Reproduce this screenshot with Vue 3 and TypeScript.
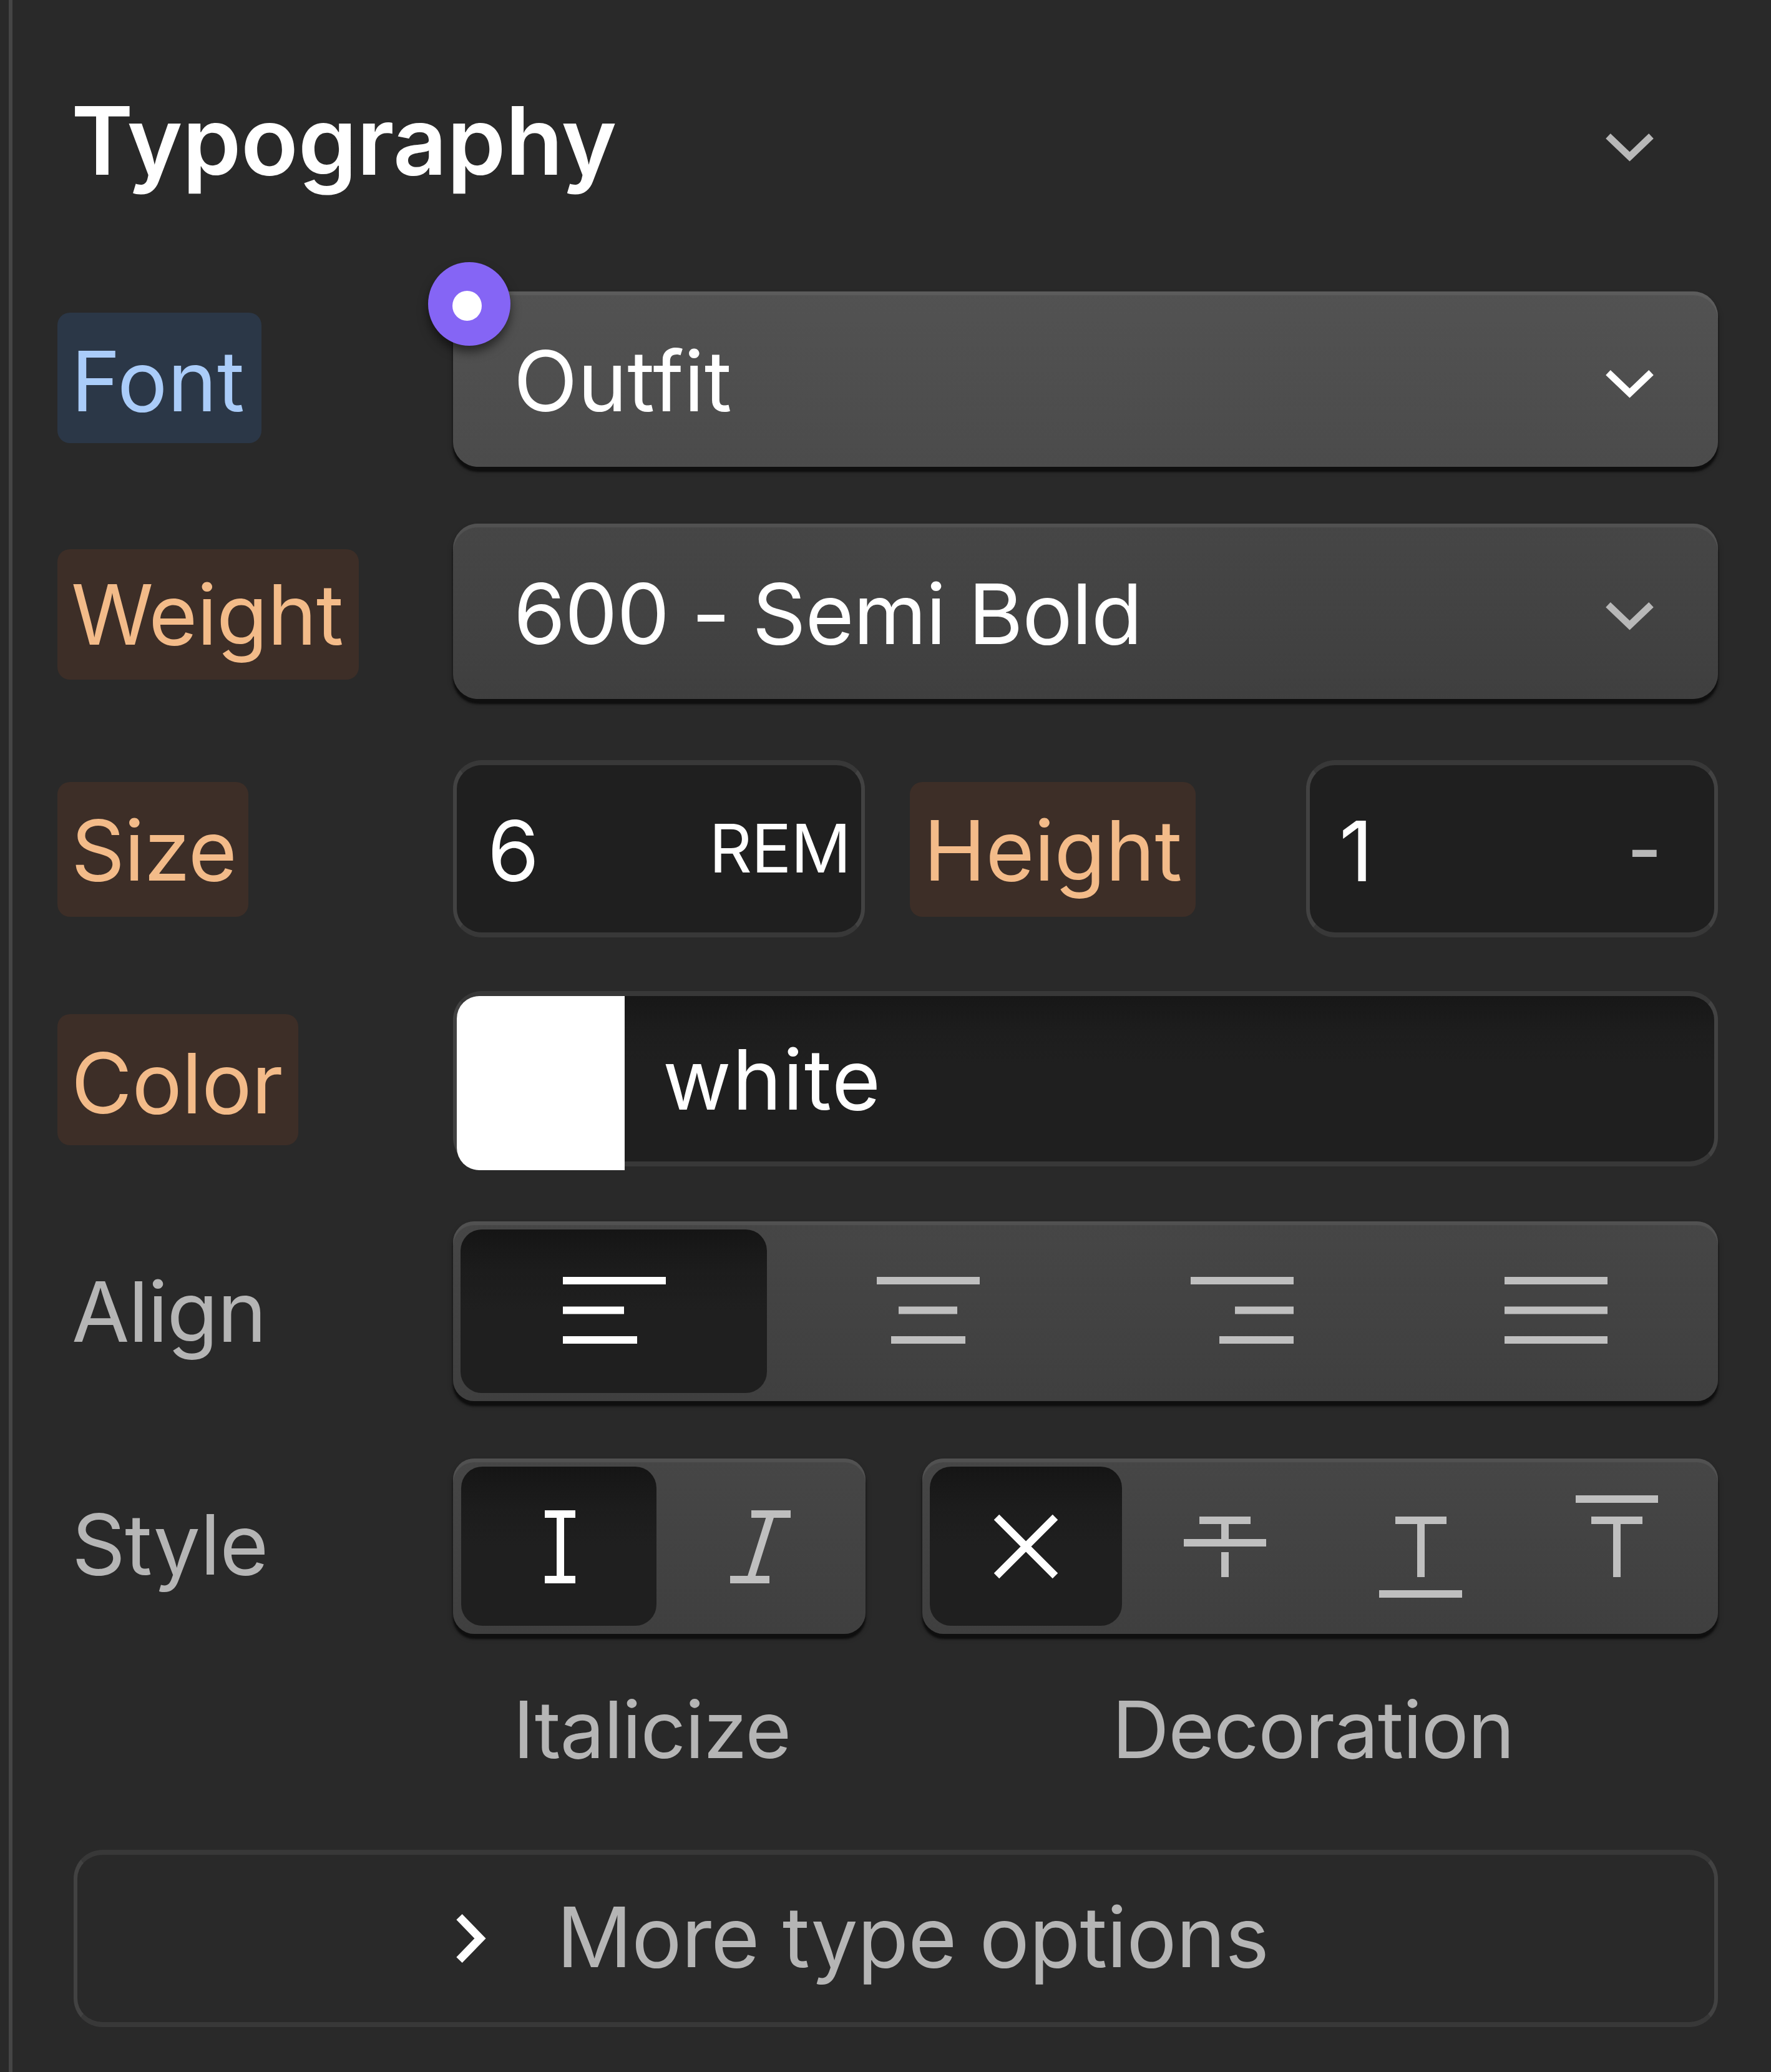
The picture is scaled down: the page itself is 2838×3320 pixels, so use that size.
<script setup lang="ts">
type Bar = [x: number, width: number]

interface AlignOption {
  name: string
  active?: boolean
  bars: [Bar, Bar, Bar]
}

const barTops = [0, 47.5, 95]

const alignOptions: AlignOption[] = [
  { name: 'Left', active: true, bars: [[1, 165], [1, 98], [1, 119]] },
  { name: 'Center', bars: [[1, 165], [36, 94], [24, 119]] },
  { name: 'Right', bars: [[1, 165], [72, 94], [47, 119]] },
  { name: 'Justify', bars: [[1, 165], [1, 165], [1, 165]] },
]

const decorations = ['Line through', 'Underline', 'Overline'] as const
</script>

<template>
  <div class="page">
    <section class="panel">
      <header class="head">
        <h2 class="title">Typography</h2>
        <svg class="chevron muted" viewBox="0 0 90 60"><path d="M10 12 44.500 45 79 12" /></svg>
      </header>

      <div class="row row-font">
        <div class="label-cell"><label class="chip blue font-chip">Font</label></div>
        <div class="select bright">
          <span class="outfit">Outfit</span>
          <svg class="chevron" viewBox="0 0 90 60"><path d="M10 12 44.500 45 79 12" /></svg>
          <span class="badge"><i></i></span>
        </div>
      </div>

      <div class="row row-weight">
        <div class="label-cell"><label class="chip weight-chip">Weight</label></div>
        <div class="select">
          <span class="weight-value">600 - Semi Bold</span>
          <svg class="chevron muted" viewBox="0 0 90 60"><path d="M10 12 44.500 45 79 12" /></svg>
        </div>
      </div>

      <div class="row row-size">
        <div class="label-cell"><label class="chip size-chip">Size</label></div>
        <div class="input size-input"><span>6</span><span class="unit">REM</span></div>
        <label class="chip height-chip">Height</label>
        <div class="input height-input"><span>1</span><span class="dash">-</span></div>
      </div>

      <div class="row row-color">
        <div class="label-cell"><label class="chip color-chip">Color</label></div>
        <div class="input color-input">
          <div class="swatch"></div>
          <span class="color-value">white</span>
        </div>
      </div>

      <div class="row row-align">
        <div class="label-cell plain align-label">Align</div>
        <div class="group align-group">
          <button v-for="o in alignOptions" :key="o.name" :class="{ active: o.active }" :aria-label="o.name">
            <svg class="align-icon" viewBox="0 0 166 107">
              <rect v-for="(b, i) in o.bars" :key="i" :x="b[0]" :y="barTops[i]" :width="b[1]" height="12" />
            </svg>
          </button>
        </div>
      </div>

      <div class="row row-style">
        <div class="label-cell plain style-label">Style</div>
        <div class="group italic-group">
          <button class="active roman" aria-label="Normal">
            <svg class="glyph" viewBox="0 0 160 180">
              <path d="M53 38H102M78 38V143M53 143H102" />
            </svg>
          </button>
          <button aria-label="Italic">
            <svg class="glyph" viewBox="0 0 160 180">
              <path d="M64 38H127M95.500 38 62.500 143M30 143H93" />
            </svg>
          </button>
        </div>
        <div class="group deco-group">
          <button class="active" aria-label="None">
            <svg class="glyph" viewBox="0 0 160 180"><path d="M33 43 127 137M127 43 33 137" /></svg>
          </button>
          <button v-for="d in decorations" :key="d" :aria-label="d">
            <svg class="glyph" viewBox="0 0 160 180">
              <path v-if="d === 'Line through'" d="M38 48H120M79 48V84M13 84H145M79 99V139" />
              <path v-else-if="d === 'Underline'" d="M38 48H120M79 48V139M12 166H145" />
              <path v-else d="M38 48H120M79 48V139M13 14H145" />
            </svg>
          </button>
        </div>
      </div>

      <div class="captions">
        <span class="cap-italic">Italicize</span>
        <span class="cap-deco">Decoration</span>
      </div>

      <button class="more">
        <svg class="arrow" viewBox="0 0 60 90"><path d="M10 10.500 43.500 45 10 79.500" /></svg>
        <span>More type options</span>
      </button>
    </section>
  </div>
</template>

<style>
body {
  background: #292929;
}
</style>

<style scoped>
.page {
  box-sizing: border-box;
  width: 2838px;
  height: 3320px;
  padding-left: 14px;
  overflow: hidden;
  background: #292929;
  color: #fff;
  font-family: Inter, sans-serif;
  font-size: 134px;
  line-height: 160px;
  letter-spacing: -0.9px;
  font-optical-sizing: none;
  white-space: nowrap;
}
.page * {
  box-sizing: border-box;
}
.panel {
  display: flex;
  flex-direction: column;
  height: 100%;
  padding: 0 85px 0 72px;
  border-left: 6px solid #454545;
}
button {
  margin: 0;
  padding: 0;
  border: 0;
  background: none;
  color: inherit;
  font: inherit;
  letter-spacing: inherit;
}

.head {
  display: flex;
  align-items: center;
  justify-content: space-between;
  height: 450px;
  padding: 0 96px 0 22px;
}
.title {
  margin: 0;
  font-size: 151px;
  font-weight: 600;
  letter-spacing: -0.4px;
}
.head .chevron {
  margin-top: 22px;
}
.chevron {
  flex: none;
  width: 90px;
  height: 60px;
  fill: none;
  stroke: #fff;
  stroke-width: 11;
}
.chevron.muted {
  stroke: #b8b8b8;
}

.row {
  display: flex;
  flex: none;
  height: 281px;
}
.row-font { margin-top: 17px; }
.row-weight { margin-top: 91px; }
.row-size { height: 284px; margin-top: 98px; }
.row-color { margin-top: 86px; }
.row-align { height: 288px; margin-top: 88px; }
.row-style { margin-top: 92px; }

.label-cell {
  flex: none;
  width: 634px;
}
.label-cell.plain {
  display: flex;
  align-items: center;
  padding-left: 23px;
  color: #b5b5b5;
}
.align-label { letter-spacing: -1.6px; }
.style-label { padding-bottom: 7px; }

.chip {
  display: flex;
  flex: none;
  align-items: center;
  height: 209px;
  padding-left: 22px;
  border-radius: 20px;
  background: #3d2e27;
  color: #f3bb89;
}
.chip.blue {
  background: #2b3747;
  color: #aaccf9;
}
.font-chip { width: 327px; margin-top: 34px; padding-top: 8px; letter-spacing: 0.2px; }
.weight-chip { width: 483px; margin-top: 41px; padding-bottom: 2px; }
.size-chip { width: 306px; height: 216px; margin-top: 35px; padding-top: 2px; }
.color-chip { width: 386px; height: 210px; margin-top: 37px; padding-top: 10px; letter-spacing: -0.5px; }
.height-chip { width: 458px; height: 216px; margin: 35px 177px 0 72px; padding-top: 2px; letter-spacing: -0.2px; }

.select {
  position: relative;
  display: flex;
  flex: 1;
  align-items: center;
  justify-content: space-between;
  padding: 7px 96px 0 97px;
  border-radius: 40px;
  background: linear-gradient(#464646, #3f3f3f);
  box-shadow: inset 0 6px 1px #515151, 0 8px 3px #0f0f0f, 0 6px 10px rgba(0, 0, 0, 0.3);
}
.select.bright {
  background: linear-gradient(#525252, #4b4b4b);
  box-shadow: inset 0 6px 1px #5c5c5c, 0 8px 3px #0f0f0f, 0 6px 10px rgba(0, 0, 0, 0.3);
}
.select .chevron { margin-top: 8px; }
.outfit { margin-top: -2px; letter-spacing: 0.3px; }
.weight-value { letter-spacing: -1.1px; }
.badge {
  position: absolute;
  top: -47px;
  left: -40px;
  width: 132px;
  height: 134px;
  border-radius: 50%;
  background: #8565f5;
  box-shadow: 0 10px 16px rgba(0, 0, 0, 0.5);
}
.badge i {
  position: absolute;
  top: 46px;
  left: 39px;
  width: 47px;
  height: 48px;
  border-radius: 50%;
  background: #fff;
}

.input {
  display: flex;
  flex: none;
  align-items: center;
  justify-content: space-between;
  border: solid #383838;
  border-width: 8px 6px;
  border-left-color: #424242;
  border-right-color: #424242;
  border-radius: 46px;
  background: #1f1f1f;
}
.size-input { width: 660px; padding: 5px 17px 0 49px; }
.height-input { width: 660px; padding: 5px 85px 0 47px; }
.unit { margin-top: -7px; font-size: 107px; letter-spacing: -1px; }
.dash { margin-top: -4px; color: #b8b8b8; font-size: 120px; font-weight: 500; }
.color-input {
  flex: 1;
  justify-content: flex-start;
  background: linear-gradient(#171717, #1d1d1d 22%, #1f1f1f 40%, #1f1f1f);
}
.swatch {
  flex: none;
  align-self: flex-start;
  width: 269px;
  height: 279px;
  border-radius: 36px 0 0 36px;
  background: #fff;
}
.color-value { margin-left: 61px; padding-top: 1px; letter-spacing: 1.8px; }

.group {
  display: flex;
  flex: none;
  border-radius: 34px;
  background: linear-gradient(#464646, #3f3f3f);
  box-shadow: inset 0 6px 1px #515151, 0 8px 3px #0f0f0f, 0 6px 10px rgba(0, 0, 0, 0.3);
}
.group button {
  display: flex;
  flex: 1;
  align-items: center;
  justify-content: center;
  min-width: 0;
}
.group .active {
  border-radius: 34px;
  background: linear-gradient(#151515, #1c1c1c 25%, #1f1f1f 50%, #1f1f1f);
}
.align-group { width: 2027px; padding: 13px 9px 13px 6px; }
.align-group .active { margin: 0 6px; flex: 0 0 491px; }
.align-icon { width: 166px; height: 107px; margin-top: -4px; fill: #bfbfbf; }
.active .align-icon { fill: #fff; }
.italic-group { width: 661px; margin-right: 91px; padding: 13px 0 13px 13px; }
.italic-group .active { flex: 0 0 313px; }
.roman .glyph { margin-left: 8px; }
.deco-group { width: 1275px; padding: 13px 4px 13px 12px; }
.deco-group .active { flex: 0 0 308px; margin-right: 9px; }
.glyph {
  flex: none;
  width: 160px;
  height: 180px;
  fill: none;
  stroke: #bfbfbf;
  stroke-width: 12;
}
.active .glyph { stroke: #fff; }

.captions {
  display: flex;
  flex: none;
  height: 160px;
  margin-top: 73px;
  padding-left: 730px;
  color: #b5b5b5;
  font-size: 127px;
  letter-spacing: -1.3px;
}
.cap-italic { width: 960px; }

.more {
  display: flex;
  flex: none;
  align-items: center;
  height: 284px;
  margin: 113px 0 0 26px;
  padding: 0 0 0 602px;
  border: solid #383838;
  border-width: 8px 6px;
  border-left-color: #424242;
  border-right-color: #424242;
  border-radius: 46px;
  color: #b5b5b5;
  letter-spacing: -0.75px;
}
.more span { margin-left: 106px; padding-bottom: 6px; }
.arrow {
  width: 60px;
  height: 90px;
  fill: none;
  stroke: #fff;
  stroke-width: 13;
}
</style>
